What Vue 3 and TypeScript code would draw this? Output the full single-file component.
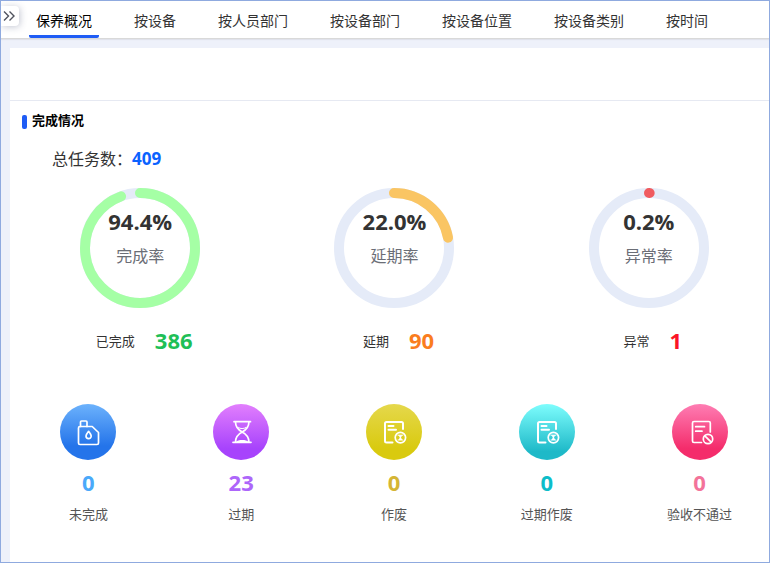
<script setup lang="ts">
import { ref } from 'vue'

interface Rate {
  label: string
  percent: number
  color: string
  countLabel: string
  count: number
  tone: string
}

interface Stat {
  label: string
  value: number
  tone: string
  icon: 'can' | 'hourglass' | 'expired' | 'rejected'
}

const tabs: string[] = ['保养概况', '按设备', '按人员部门', '按设备部门', '按设备位置', '按设备类别', '按时间']
const active = ref(0)
const total = 409

const rates: Rate[] = [
  { label: '完成率', percent: 94.4, color: '#a5ffa5', countLabel: '已完成', count: 386, tone: 'green' },
  { label: '延期率', percent: 22, color: '#fac563', countLabel: '延期', count: 90, tone: 'orange' },
  { label: '异常率', percent: 0.2, color: '#f05b5f', countLabel: '异常', count: 1, tone: 'red' },
]

const stats: Stat[] = [
  { label: '未完成', value: 0, tone: 'blue', icon: 'can' },
  { label: '过期', value: 23, tone: 'purple', icon: 'hourglass' },
  { label: '作废', value: 0, tone: 'yellow', icon: 'expired' },
  { label: '过期作废', value: 0, tone: 'teal', icon: 'expired' },
  { label: '验收不通过', value: 0, tone: 'pink', icon: 'rejected' },
]
</script>

<template>
  <div class="page">
    <button class="expand" type="button" aria-label="展开">
      <svg width="12" height="12" viewBox="0 0 12 12" aria-hidden="true">
        <path d="M1 1.5 5.5 6 1 10.5M6.500 1.500 11 6 6.500 10.500" />
      </svg>
    </button>
    <nav class="tabs">
      <button
        v-for="(tab, i) in tabs"
        :key="tab"
        type="button"
        class="tab"
        :class="{ active: i === active }"
        @click="active = i"
      >{{ tab }}</button>
    </nav>
    <main class="panel">
      <div class="toolbar"></div>
      <h2 class="title">完成情况</h2>
      <p class="total">总任务数：<b>{{ total }}</b></p>

      <section class="rates">
        <div v-for="r in rates" :key="r.label" class="rate">
          <div class="ring">
            <svg viewBox="0 0 120 120" aria-hidden="true">
              <circle class="track" cx="60" cy="60" r="55" />
              <circle
                class="arc"
                cx="60"
                cy="60"
                r="55"
                pathLength="100"
                transform="rotate(-90 60 60)"
                :stroke="r.color"
                :stroke-dasharray="`${r.percent} 100`"
              />
            </svg>
            <div class="ring-text">
              <strong>{{ r.percent.toFixed(1) }}%</strong>
              <span>{{ r.label }}</span>
            </div>
          </div>
          <div class="count">
            <span>{{ r.countLabel }}</span>
            <strong :class="r.tone">{{ r.count }}</strong>
          </div>
        </div>
      </section>

      <section class="stats">
        <div v-for="s in stats" :key="s.label" class="stat" :class="s.tone">
          <div class="badge">
            <svg viewBox="0 0 56 56" aria-hidden="true">
              <g v-if="s.icon === 'can'">
                <path d="M20.500 22.500V18a1 1 0 0 1 1-1h4.500a1 1 0 0 1 1 1v4.500" />
                <path d="M20 22.500h12.200l6.300 6V39a1.500 1.500 0 0 1-1.500 1.500H20a1.500 1.500 0 0 1-1.500-1.500V24a1.500 1.500 0 0 1 1.500-1.500z" />
                <path d="M28.600 27.300c1.600 2 2.600 3.300 2.600 4.700a2.600 2.600 0 0 1-5.200 0c0-1.400 1-2.700 2.600-4.700z" />
              </g>
              <g v-else-if="s.icon === 'hourglass'">
                <path d="M21 17.700h16.500M20 38.300h18" />
                <path d="M22.500 18c0 5 2 7.500 6.700 10 4.700-2.500 6.700-5 6.700-10M22.500 38c0-5 2-7.500 6.700-10 4.700 2.500 6.700 5 6.700 10" />
                <path class="thin" d="M25.500 23.500c1.500 1.500 5.500 1.500 7.500 0" />
                <path class="solid" d="M23 38c1-1.500 3.500-2 6.200-2s5.200.5 6.200 2z" />
              </g>
              <g v-else-if="s.icon === 'expired'">
                <path class="bold" d="M26.500 38.500H20.500a1.500 1.500 0 0 1-1.500-1.500V19.500a1.500 1.500 0 0 1 1.500-1.500h15a1.500 1.500 0 0 1 1.500 1.500V25" />
                <path class="bold" d="M22.500 22h5M22.500 25.700h7.500" />
                <circle cx="34.400" cy="33.600" r="5.200" />
                <path class="thin" d="M32 31.200h4.800M32 36h4.800" />
                <path class="solid" d="M32.500 31.200h3.800l-1.300 2.400 1.300 2.400h-3.800l1.300-2.400z" />
              </g>
              <g v-else>
                <path d="M29.500 38.500H22a1.500 1.500 0 0 1-1.500-1.500V19a1.500 1.500 0 0 1 1.500-1.500h14.800a1.500 1.500 0 0 1 1.500 1.500v9" />
                <path d="M23.700 22.700h8.800M23.700 27.200h6.300" />
                <circle cx="36" cy="35" r="4.700" />
                <path d="m32.800 31.800 6.400 6.400" />
              </g>
            </svg>
          </div>
          <strong>{{ s.value }}</strong>
          <span>{{ s.label }}</span>
        </div>
      </section>
    </main>
  </div>
</template>

<style>
body {
  background: #fff;
}
</style>

<style scoped>
.page {
  position: relative;
  box-sizing: border-box;
  min-height: calc(100vh - 1px);
  margin: 0 1px 1px 0;
  border: 1px solid #8faadf;
  background: #eef1fa;
  font-family: "Open Sans", "Noto Sans CJK SC", sans-serif;
  color: #333;
  display: flex;
  flex-direction: column;
  overflow: hidden;
}
button {
  font-family: inherit;
  border: 0;
  cursor: pointer;
}
.expand {
  position: absolute;
  left: 0;
  top: 5px;
  width: 18px;
  height: 20px;
  padding: 0 2px;
  display: flex;
  align-items: center;
  background: #fff;
  border-radius: 0 4px 4px 0;
  box-shadow: 1px 1px 7px rgba(60, 70, 110, 0.3);
}
.expand svg {
  flex: none;
  fill: none;
  stroke: #50535e;
  stroke-width: 1.4;
}
.tabs {
  display: flex;
  gap: 28px;
  height: 37px;
  padding-left: 28px;
  background: #fff;
  border-bottom: 1px solid #d9d9d9;
  box-shadow: 0 1px 1px rgba(0, 0, 0, 0.06);
}
.tab {
  flex: none;
  box-sizing: border-box;
  height: 37px;
  padding: 6px 7px 0;
  background: none;
  border-bottom: 3px solid transparent;
  border-radius: 2px;
  font-size: 14px;
  line-height: 28px;
  color: #333;
  white-space: nowrap;
}
.tab.active {
  color: #000;
  border-bottom-color: #1f5cf5;
}
.panel {
  flex: 1;
  margin: 9px 0 0 9px;
  background: #fff;
}
.toolbar {
  height: 52px;
  border-bottom: 1px solid #e6e9f2;
}
.title {
  display: flex;
  align-items: center;
  gap: 5px;
  margin: 9px 0 0 12px;
  font-size: 13px;
  line-height: 20px;
  color: #000;
}
.title::before {
  content: "";
  width: 5px;
  height: 14px;
  margin-top: 4px;
  border-radius: 2px;
  background: #1f5cf5;
}
.total {
  margin: 16px 0 0 42px;
  font-size: 16px;
  line-height: 26px;
}
.total b {
  font-size: 17px;
  color: #0b62ff;
}
.rates,
.stats {
  display: grid;
  margin: 0 -7px 0 2px;
}
.rates {
  grid-template-columns: repeat(3, 1fr);
  margin-top: 16px;
  margin-left: 3px;
}
.rate,
.stat {
  display: flex;
  flex-direction: column;
  align-items: center;
}
.ring {
  display: grid;
  width: 120px;
  height: 120px;
}
.ring svg,
.ring-text {
  grid-area: 1 / 1;
}
.ring circle {
  fill: none;
  stroke-width: 10;
}
.track {
  stroke: #e5ebf8;
}
.arc {
  stroke-linecap: round;
}
.ring-text {
  display: flex;
  flex-direction: column;
  align-items: center;
  gap: 5px;
  padding-top: 18px;
}
.ring-text strong {
  font-size: 22px;
  line-height: 30px;
}
.ring-text span {
  font-size: 16px;
  line-height: 30px;
  color: #6b6e76;
}
.count {
  display: flex;
  align-items: center;
  gap: 20px;
  margin-top: 18px;
  padding-left: 8px;
  font-size: 13px;
  line-height: 30px;
}
.count strong {
  font-size: 22px;
  line-height: 28px;
  padding-bottom: 2px;
}
.green {
  color: #1fbf57;
}
.orange {
  color: #fa7d1e;
}
.red {
  color: #fb1426;
}
.stats {
  grid-template-columns: repeat(5, 1fr);
  margin-top: 48px;
}
.badge {
  width: 56px;
  height: 56px;
  border-radius: 50%;
}
.badge svg {
  display: block;
  fill: none;
  stroke: #fff;
  stroke-width: 1.7;
  stroke-linecap: round;
  stroke-linejoin: round;
}
.badge .thin {
  stroke-width: 1;
}
.badge .bold {
  stroke-width: 2;
}
.badge .solid {
  fill: #fff;
  stroke: none;
}
.stat strong {
  margin-top: 7px;
  font-size: 22px;
  line-height: 30px;
}
.stat span {
  margin-top: 7px;
  font-size: 13px;
  line-height: 20px;
  color: #555;
}
.blue strong {
  color: #4aa9fa;
}
.blue .badge {
  background: linear-gradient(#6cb2fc, #2474ea 75%);
}
.purple strong {
  color: #ad66fa;
}
.purple .badge {
  background: linear-gradient(#e27ffd, #a743fc 80%);
}
.yellow strong {
  color: #d5b535;
}
.yellow .badge {
  background: linear-gradient(#e5d84c, #d9ca0f 80%);
}
.teal strong {
  color: #0dbdc9;
}
.teal .badge {
  background: linear-gradient(#7efdfd, #1eb9c8 85%);
}
.pink strong {
  color: #f3739a;
}
.pink .badge {
  background: linear-gradient(#fe7db3, #f42c6b 80%);
}
</style>
